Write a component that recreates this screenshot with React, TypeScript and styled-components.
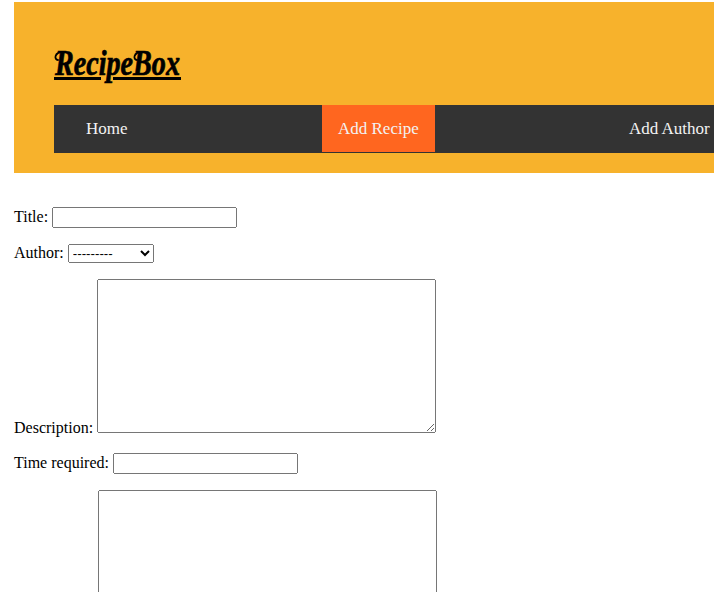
import React from 'react';
import styled, { createGlobalStyle } from 'styled-components';

const Global = createGlobalStyle`
  html { overflow: hidden; }
  body {
    margin: 0; padding: 2px 0 0 14px; box-sizing: border-box; height: 100vh; overflow: hidden;
    font-family: "Liberation Serif", serif; font-size: 16px; color: #000; background: #fff;
  }
`;
const Header = styled.header`
  height: 171px; box-sizing: border-box; padding: 40px 0 0 40px; background: #f7b22c;
`;
const Brand = styled.a`
  display: block; width: 140px; height: 63px; color: #000;
`;
const Logo = styled.svg`
  display: block; overflow: visible;
  text {
    font: italic bold 35px "Liberation Serif", serif;
    fill: currentColor; stroke: currentColor; stroke-width: 0.7px;
  }
  path { fill: none; stroke: currentColor; stroke-width: 1.8px; stroke-linecap: round; }
`;
const Nav = styled.ul`
  display: flex; margin: 0; padding: 0; height: 48px; background: #333; list-style: none;
`;
const Item = styled.li<{ $slot: number; $indent?: number }>`
  box-sizing: border-box; flex: none;
  width: ${p => p.$slot}px; padding-left: ${p => p.$indent ?? 0}px;
`;
const NavLink = styled.a<{ $active?: boolean }>`
  display: inline-block; box-sizing: border-box; height: 47px; padding: 14px 16px;
  line-height: 19px; font-size: 17px; white-space: nowrap;
  color: #f2f2f2; background: ${p => (p.$active ? '#ff661f' : 'transparent')};
`;
const Form = styled.form`padding-top: 34px;`;
const Field = styled.p`margin: 0 0 16px;`;
const Input = styled.input`
  box-sizing: border-box; width: 185px; height: 21px;
`;
const Select = styled.select`width: 86px;`;
const Area = styled.textarea`box-sizing: border-box; width: 339px; height: 154px;`;

export default function App() {
  return (
    <>
      <Global />
      <Header>
        <Brand>
          <Logo width="140" height="50" viewBox="0 0 140 50">
            <text x="1" y="33" textLength="125" lengthAdjust="spacingAndGlyphs">RecipeBox</text>
            {/* Swashes on the two capitals. */}
            <path d="M4 18C0 18 0 10 9 10" />
            <path d="M83 18C79 18 79 10 88 10" />
            {/* The underline breaks around the descender of the p. */}
            <rect x="0" y="35" width="47" height="3" />
            <rect x="59" y="35" width="68" height="3" />
          </Logo>
        </Brand>
        <Nav>
          <Item $slot={268} $indent={16}><NavLink>Home</NavLink></Item>
          <Item $slot={291}><NavLink $active>Add Recipe</NavLink></Item>
          <Item $slot={101}><NavLink>Add Author</NavLink></Item>
        </Nav>
      </Header>
      <Form>
        <Field><label>Title: </label><Input /></Field>
        <Field><label>Author: </label><Select><option>---------</option></Select></Field>
        <Field><label>Description: </label><Area /></Field>
        <Field><label>Time required: </label><Input /></Field>
        <Field><label>Instructions: </label><Area /></Field>
      </Form>
    </>
  );
}
